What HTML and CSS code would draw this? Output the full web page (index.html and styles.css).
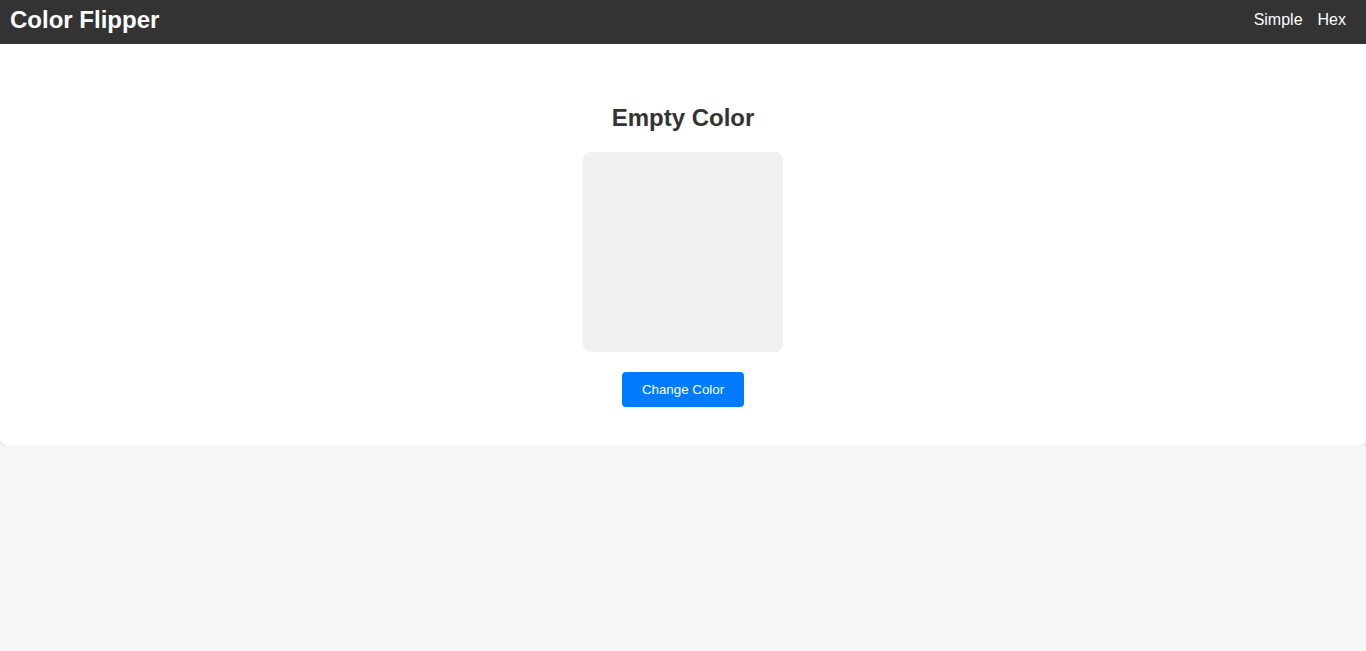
FILE: index.html
```html
<!DOCTYPE html>
<html>
<head>
<meta charset="utf-8">
<link rel="stylesheet" href="styles.css">
</head>
<body>
<header class="topbar">
  <div class="brand">Color Flipper</div>
  <nav class="nav">
    <a class="nav-link" href="#">Simple</a>
    <a class="nav-link" href="#">Hex</a>
  </nav>
</header>
<main class="card">
  <h2 class="title">Empty Color</h2>
  <div class="swatch"></div>
  <button class="btn">Change Color</button>
</main>
</body>
</html>
```
FILE: styles.css
```css
html, body {
  margin: 0;
  padding: 0;
  background: #f6f6f6;
  font-family: "Liberation Sans", Arial, sans-serif;
}
.topbar {
  height: 44px;
  background: #333333;
  color: #fff;
  display: flex;
  align-items: center;
  justify-content: space-between;
  padding: 0 20px 4px 10px;
  box-sizing: border-box;
}
.brand {
  font-size: 24px;
  font-weight: bold;
}
.nav {
  display: flex;
  gap: 15px;
}
.nav-link {
  color: #fff;
  text-decoration: none;
  font-size: 16px;
}
.card {
  background: #fff;
  border-radius: 0 0 8px 8px;
  box-shadow: 0 2px 5px rgba(0,0,0,0.1);
  padding: 40px 0 39px;
  display: flex;
  flex-direction: column;
  align-items: center;
}
.title {
  margin: 20px 0;
  font-size: 24px;
  font-weight: bold;
  color: #333333;
  line-height: 28px;
}
.swatch {
  width: 200px;
  height: 200px;
  background: #f0f0f0;
  border-radius: 8px;
}
.btn {
  margin-top: 20px;
  background: #007bff;
  color: #fff;
  border: none;
  border-radius: 4px;
  padding: 0 20px;
  height: 35px;
  font-size: 13.333px;
  font-family: "Liberation Sans", Arial, sans-serif;
}
```
